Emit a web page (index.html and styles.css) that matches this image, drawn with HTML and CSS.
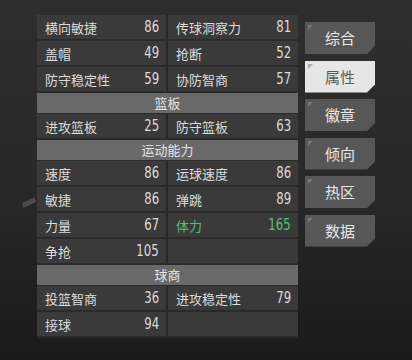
FILE: index.html
```html
<!DOCTYPE html>
<html>
    <head>
        <title>属性</title>
        <meta charset="utf-8" />
        <link rel="stylesheet" href="styles.css">
    </head>
    <body>
        <div class="scratch"></div>
        <div class="content">
            <div class="attrTable">
                <div class="row">
                    <div class="cell"><span>横向敏捷</span><b>86</b></div>
                    <div class="cell"><span>传球洞察力</span><b>81</b></div>
                </div>
                <div class="row">
                    <div class="cell"><span>盖帽</span><b>49</b></div>
                    <div class="cell"><span>抢断</span><b>52</b></div>
                </div>
                <div class="row">
                    <div class="cell"><span>防守稳定性</span><b>59</b></div>
                    <div class="cell"><span>协防智商</span><b>57</b></div>
                </div>

                <div class="group">篮板</div>
                <div class="row">
                    <div class="cell"><span>进攻篮板</span><b>25</b></div>
                    <div class="cell"><span>防守篮板</span><b>63</b></div>
                </div>

                <div class="group">运动能力</div>
                <div class="row">
                    <div class="cell"><span>速度</span><b>86</b></div>
                    <div class="cell"><span>运球速度</span><b>86</b></div>
                </div>
                <div class="row">
                    <div class="cell"><span>敏捷</span><b>86</b></div>
                    <div class="cell"><span>弹跳</span><b>89</b></div>
                </div>
                <div class="row">
                    <div class="cell"><span>力量</span><b>67</b></div>
                    <div class="cell green"><span>体力</span><b>165</b></div>
                </div>
                <div class="row">
                    <div class="cell"><span>争抢</span><b>105</b></div>
                    <div class="cell"></div>
                </div>

                <div class="group">球商</div>
                <div class="row">
                    <div class="cell"><span>投篮智商</span><b>36</b></div>
                    <div class="cell"><span>进攻稳定性</span><b>79</b></div>
                </div>
                <div class="row">
                    <div class="cell"><span>接球</span><b>94</b></div>
                    <div class="cell"></div>
                </div>
            </div>

            <ul class="tabs">
                <li>综合</li>
                <li class="active">属性</li>
                <li>徽章</li>
                <li>倾向</li>
                <li>热区</li>
                <li>数据</li>
            </ul>
        </div>
    </body>
</html>
```

FILE: styles.css
```css
body {
    margin:             0;
    height:             360px;
    overflow:           hidden;
    background:         linear-gradient(180deg, #2e2e2e 0%, #282828 55%, #1a1a1a 100%);
    color:              #dcdcdc;
    font-family:        "Noto Sans CJK SC", "Noto Sans", sans-serif;
    font-size:          13px;
}

/* faint stroke on the left edge */
.scratch {
    position:           absolute;
    left:               22px;
    top:                200px;
    width:              14px;
    height:             5px;
    background:         #4a4a4a;
    transform:          rotate(-25deg);
}

.content {
    display:            flex;
    align-items:        flex-start;
    padding:            15px 0 0 37px;
}

/* The attribute table */
.attrTable {
    width:              261px;
    display:            flex;
    flex-direction:     column;
    background:         #272727;
}

.row {
    display:            grid;
    grid-template-columns: 129px 130px;
    column-gap:         2px;
    border-bottom:      2px solid #2a2a2a;
}

.cell {
    height:             24px;
    display:            flex;
    align-items:        center;
    justify-content:    space-between;
    padding:            0 7px 0 8px;
    background:         #3a3a3a;
}

.cell b {
    font-family:        "DejaVu Sans", sans-serif;
    font-weight:        normal;
    font-size:          15px;
    transform:          scaleX(0.78);
    transform-origin:   right center;
}

.cell.green {
    color:              #4fc56b;
}

.group {
    height:             20px;
    line-height:        20px;
    text-align:         center;
    background:         #696969;
    color:              #e4e4e4;
    border-bottom:      1px solid #2a2a2a;
}

/* The tab column */
.tabs {
    list-style:         none;
    margin:             7px 0 0 7px;
    padding:            0;
}

.tabs li {
    position:           relative;
    width:              70px;
    height:             32px;
    margin-bottom:      6.5px;
    line-height:        32px;
    text-align:         center;
    font-size:          15px;
    color:              #e8e8e8;
    background:         #575757;
    clip-path:          polygon(0 0, 100% 0, 100% calc(100% - 8px), calc(100% - 8px) 100%, 0 100%);
}

.tabs li::before {
    content:            "";
    position:           absolute;
    left:               3px;
    top:                3px;
    border-top:         5px solid #787878;
    border-right:       5px solid transparent;
}

.tabs li.active {
    background:         #e6e6e6;
    color:              #5a5a5a;
}

.tabs li.active::before {
    border-top-color:   #a8a8a8;
}
```
